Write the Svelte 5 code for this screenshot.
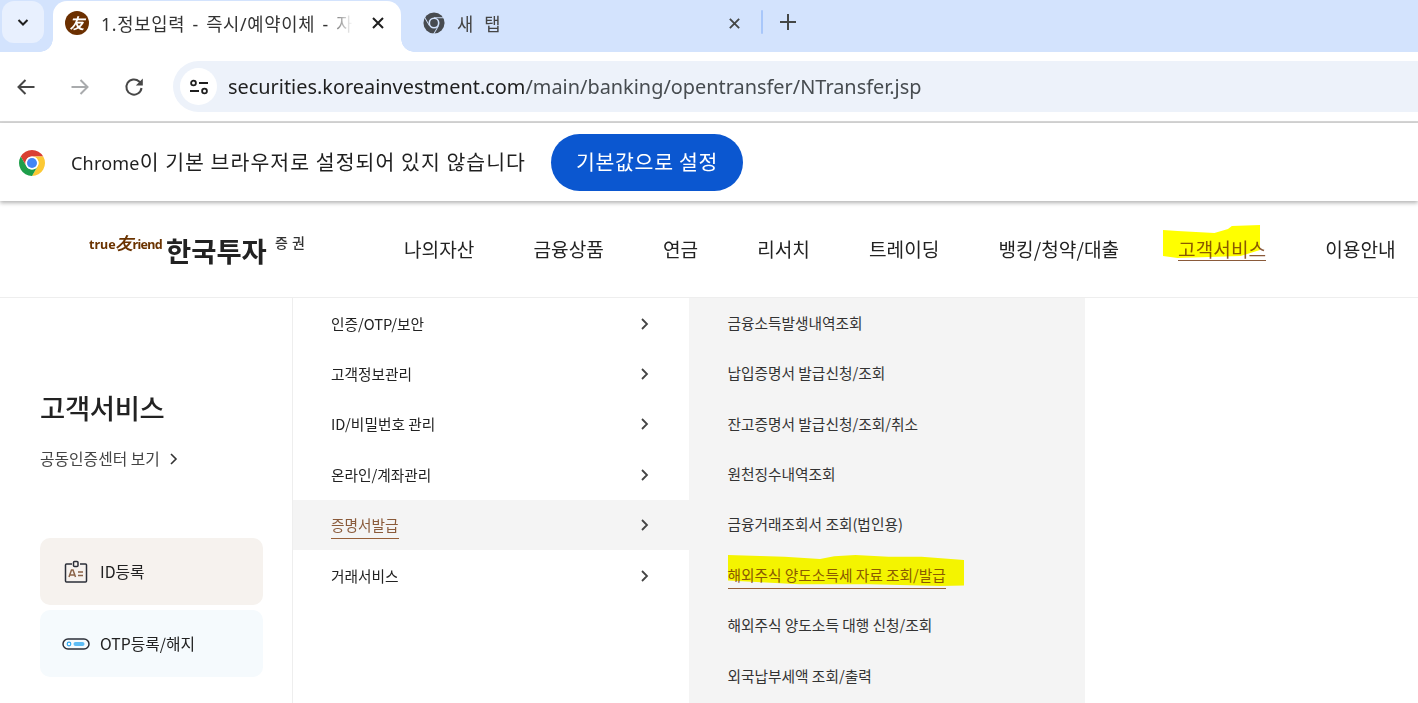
<script>
  const nav = ["나의자산", "금융상품", "연금", "리서치", "트레이딩", "뱅킹/청약/대출", "고객서비스", "이용안내"];
  const menu = ["인증/OTP/보안", "고객정보관리", "ID/비밀번호 관리", "온라인/계좌관리", "증명서발급", "거래서비스"];
  const sub = [
    "금융소득발생내역조회",
    "납입증명서 발급신청/조회",
    "잔고증명서 발급신청/조회/취소",
    "원천징수내역조회",
    "금융거래조회서 조회(법인용)",
    "해외주식 양도소득세 자료 조회/발급",
    "해외주식 양도소득 대행 신청/조회",
    "외국납부세액 조회/출력"
  ];
  // one ring segment of the chrome logo, rotated for the other two
  const ring = "M4.950 13A22 22 0 0 1 43.050 13H24A11 11 0 0 0 14.470 29.500Z";
</script>

<div class="page">
  <div class="tabstrip">
    <button class="tab-search" aria-label="탭 검색">
      <svg width="14" height="14" viewBox="0 0 14 14"><path d="M2.500 5l4.500 4.500L11.500 5" fill="none" stroke="#1f1f1f" stroke-width="2"/></svg>
    </button>
    <div class="tab active">
      <span class="favicon">友</span>
      <span class="tab-title">1.정보입력 - 즉시/예약이체 - 자</span>
      <svg class="tab-close" width="14" height="14" viewBox="0 0 14 14"><path d="M2 2l10 10M12 2L2 12" stroke="#1f1f1f" stroke-width="2"/></svg>
    </div>
    <div class="tab idle">
      <svg width="22" height="22" viewBox="0 0 48 48">
        <circle cx="24" cy="24" r="23" fill="#474b50"/>
        <circle cx="24" cy="24" r="12" fill="#d3e3fd"/>
        <circle cx="24" cy="24" r="8.500" fill="#474b50"/>
        <path d="M24 12.500H46" stroke="#d3e3fd" stroke-width="2"/>
        <path d="M24 12.500H46" stroke="#d3e3fd" stroke-width="2" transform="rotate(120 24 24)"/>
        <path d="M24 12.500H46" stroke="#d3e3fd" stroke-width="2" transform="rotate(240 24 24)"/>
      </svg>
      <span class="tab-title new">새 탭</span>
      <svg class="tab-close" width="13" height="13" viewBox="0 0 14 14"><path d="M2 2l10 10M12 2L2 12" stroke="#444746" stroke-width="2"/></svg>
    </div>
    <span class="tab-sep"></span>
    <svg class="tab-plus" width="16" height="16" viewBox="0 0 16 16"><path d="M8 0v16M0 8h16" stroke="#444746" stroke-width="2"/></svg>
  </div>

  <div class="toolbar">
    <svg class="tool" width="20" height="20" viewBox="0 0 20 20"><path d="M18.500 10H3M9.500 3L2.500 10l7 7" fill="none" stroke="#474747" stroke-width="2"/></svg>
    <svg class="tool" width="20" height="20" viewBox="0 0 20 20"><path d="M1.500 10H17M10.500 3l7 7-7 7" fill="none" stroke="#a9abad" stroke-width="2"/></svg>
    <svg class="tool" width="20" height="20" viewBox="0 0 20 20"><path d="M17.500 11a7.600 7.600 0 1 1-2.300-6.500l2.300 2.300" fill="none" stroke="#474747" stroke-width="2"/><path d="M18.800 1.500v7h-7z" fill="#474747"/></svg>
    <div class="omnibox">
      <span class="site-info">
        <svg width="20" height="16" viewBox="0 0 20 16" fill="none" stroke="#1f1f1f" stroke-width="1.800">
          <circle cx="4.500" cy="4" r="2.400"/><path d="M10 4h9M1 12h9"/><circle cx="15.500" cy="12" r="2.400"/>
        </svg>
      </span>
      <span class="url"><b>securities.koreainvestment.com</b>/main/banking/opentransfer/NTransfer.jsp</span>
    </div>
  </div>

  <div class="infobar">
    <svg width="26" height="26" viewBox="2 2 44 44">
      <path d={ring} fill="#d93f32"/>
      <path d={ring} fill="#fcc934" transform="rotate(120 24 24)"/>
      <path d={ring} fill="#1e9e4a" transform="rotate(240 24 24)"/>
      <circle cx="24" cy="24" r="11" fill="#fff"/>
      <circle cx="24" cy="24" r="8.500" fill="#4285f4"/>
    </svg>
    <span class="info-text"><span class="latin">Chrome</span>이 기본 브라우저로 설정되어 있지 않습니다</span>
    <button class="default-btn">기본값으로 설정</button>
  </div>

  <header class="site-header">
    <div class="logo">
      <span class="logo-en">true<i>友</i><em>riend</em></span>
      <span class="logo-ko">한국투자</span>
      <span class="logo-sec">증권</span>
    </div>
    <nav class="gnb">
      {#each nav as item}
        <span class="gnb-item" class:on={item === "고객서비스"}>{item}</span>
      {/each}
    </nav>
    <span class="marker marker-nav"></span>
  </header>

  <main class="content">
    <aside class="side">
      <h2>고객서비스</h2>
      <p class="cert">공동인증센터 보기
        <svg width="9" height="12" viewBox="0 0 9 12"><path d="M2 1l5 5-5 5" fill="none" stroke="#333" stroke-width="1.600"/></svg>
      </p>
      <div class="side-card id">
        <svg width="24" height="24" viewBox="0 0 24 24" fill="none">
          <path d="M8 4H2.500a1 1 0 0 0-1 1v16a1 1 0 0 0 1 1h19a1 1 0 0 0 1-1V5a1 1 0 0 0-1-1H16" stroke="#2b2f38" stroke-width="1.500"/>
          <rect x="9.500" y="1.500" width="4.500" height="5" rx="1" stroke="#2b2f38" stroke-width="1.500"/>
          <path d="M5 17l2.500-7h1.500l2.500 7M6 15h4.500M14 12h5M14 15.500h5" stroke="#8a6347" stroke-width="1.500"/>
        </svg>
        <span>ID등록</span>
      </div>
      <div class="side-card otp">
        <svg width="28" height="12" viewBox="0 0 28 12" fill="none">
          <rect x="1" y="1" width="26" height="10" rx="5" stroke="#2b2f38" stroke-width="1.500"/>
          <circle cx="7" cy="6" r="1.800" stroke="#2ea8f2" stroke-width="1.200"/>
          <rect x="11.500" y="4" width="11" height="4" rx="2" fill="#5cbcf5"/>
        </svg>
        <span>OTP등록/해지</span>
      </div>
    </aside>

    <ul class="menu">
      {#each menu as item}
        <li class:on={item === "증명서발급"}>
          <span class="label">{item}</span>
          <svg width="9" height="12" viewBox="0 0 9 12"><path d="M2 1l5 5-5 5" fill="none" stroke="#444" stroke-width="1.800"/></svg>
        </li>
      {/each}
    </ul>

    <ul class="sub">
      {#each sub as item}
        <li class:on={item.includes("세 자료")}><span class="label">{item}</span></li>
      {/each}
      <span class="marker marker-sub"></span>
    </ul>
  </main>
</div>

<style>
  :global(body) {
    margin: 0;
    background: #fff;
  }

  .page {
    width: 1418px;
    height: 703px;
    overflow: hidden;
    font-family: "Noto Sans CJK KR", "Noto Sans", sans-serif;
    color: #222;
  }

  .tabstrip {
    height: 52px;
    background: #d3e3fd;
    display: flex;
    align-items: flex-start;
    box-sizing: border-box;
    padding-top: 1px;
  }

  .tab-search {
    width: 42px;
    height: 42px;
    margin-left: 2px;
    border: 0;
    padding: 0;
    border-radius: 12px;
    background: #e8f0fe;
    display: flex;
    align-items: center;
    justify-content: center;
  }

  .tab {
    height: 51px;
    display: flex;
    align-items: center;
    box-sizing: border-box;
    font-family: "Noto Sans", "Noto Sans CJK KR", sans-serif;
    font-size: 17.700px;
    position: relative;
  }

  .tab.active {
    width: 348px;
    margin-left: 9px;
    background: #fff;
    border-radius: 14px 14px 0 0;
    padding: 0 16px 7px 12px;
    color: #333;
  }

  /* flared corners at the foot of the active tab */
  .tab.active::before,
  .tab.active::after {
    content: "";
    position: absolute;
    bottom: 0;
    width: 13px;
    height: 13px;
  }

  .tab.active::before {
    left: -13px;
    background: radial-gradient(circle at 0 0, #d3e3fd 12.500px, #fff 13px);
  }

  .tab.active::after {
    right: -13px;
    background: radial-gradient(circle at 100% 0, #d3e3fd 12.500px, #fff 13px);
    z-index: 1;
  }

  .favicon {
    flex: none;
    width: 24px;
    height: 24px;
    border-radius: 50%;
    background: #6b2f00;
    color: #fff;
    font-size: 15px;
    font-weight: 700;
    font-style: italic;
    line-height: 24px;
    text-align: center;
  }

  .tab-title {
    flex: 1;
    margin-left: 12px;
    white-space: nowrap;
    overflow: hidden;
    -webkit-mask-image: linear-gradient(to right, #000 86%, transparent 96%);
    mask-image: linear-gradient(to right, #000 86%, transparent 96%);
    letter-spacing: 0.7px;
    word-spacing: 2px;
  }

  .tab-title.new {
    color: #444;
    word-spacing: 5px;
  }

  .tab-close {
    flex: none;
    margin-left: 8px;
  }

  .tab.idle {
    width: 359px;
    padding: 0 19px 7px 22px;
    color: #444;
  }

  .tab-sep {
    width: 2px;
    height: 24px;
    margin: 9px 0 0 1px;
    border-radius: 1px;
    background: #a8c7fa;
  }

  .tab-plus {
    margin: 13px 0 0 17px;
  }

  .toolbar {
    height: 71px;
    background: #fff;
    box-sizing: border-box;
    padding: 9px 0 9px 16px;
    display: flex;
    align-items: center;
    gap: 34px;
    border-bottom: 2px solid #d6d6d6;
  }

  .omnibox {
    flex: 1;
    height: 51px;
    margin-left: -5px;
    border-radius: 26px 0 0 26px;
    background: #edf2fa;
    display: flex;
    align-items: center;
    padding-left: 7px;
    gap: 11px;
  }

  .site-info {
    width: 37px;
    height: 37px;
    border-radius: 50%;
    background: #fff;
    display: flex;
    align-items: center;
    justify-content: center;
  }

  .url {
    font-family: "Noto Sans", sans-serif;
    font-size: 19.900px;
    color: #474c50;
  }

  .url b {
    font-weight: 400;
    color: #1f1f1f;
  }

  .infobar {
    height: 78px;
    box-sizing: border-box;
    padding: 1px 0 0 19px;
    display: flex;
    align-items: center;
    background: #fff;
    box-shadow: 0 2px 4px rgba(0, 0, 0, 0.3);
    position: relative;
  }

  .info-text {
    margin: -3px 0 0 26px;
    font-family: "Noto Sans CJK KR", sans-serif;
    font-size: 20.500px;
    color: #1f1f1f;
    letter-spacing: 1.040px;
  }

  .latin {
    font-family: "Noto Sans", sans-serif;
    font-size: 18px;
    letter-spacing: 0.2px;
  }

  .default-btn {
    width: 192px;
    height: 57px;
    margin-left: 25px;
    border: 0;
    padding: 0 0 3px;
    border-radius: 29px;
    background: #0b57d0;
    color: #fff;
    font-family: "Noto Sans CJK KR", sans-serif;
    font-size: 20.500px;
    letter-spacing: 0.7px;
  }

  .site-header {
    height: 97px;
    box-sizing: border-box;
    border-bottom: 1px solid #eee;
    display: flex;
    position: relative;
  }

  .logo {
    width: 404px;
    flex: none;
    position: relative;
  }

  .logo-en {
    position: absolute;
    left: 89px;
    top: 33px;
    font-family: "Noto Sans", sans-serif;
    font-size: 12.500px;
    font-weight: 700;
    color: #6b3300;
    white-space: nowrap;
  }

  .logo-en i {
    font-size: 17px;
    line-height: 1;
  }

  .logo-en em {
    font-style: normal;
    letter-spacing: -0.700px;
  }

  .logo-ko {
    position: absolute;
    left: 166px;
    top: 30px;
    font-size: 27.400px;
    font-weight: 700;
    line-height: 38px;
    color: #222;
  }

  .logo-sec {
    position: absolute;
    left: 275px;
    top: 31px;
    font-size: 14px;
    font-weight: 500;
    letter-spacing: 4px;
    color: #333;
  }

  .gnb {
    display: flex;
    align-items: flex-start;
    gap: 59px;
    padding-top: 37px;
    font-size: 19.150px;
    line-height: 22px;
    white-space: nowrap;
  }

  .gnb-item {
    color: #222;
  }

  .gnb-item.on {
    color: #8a5a3a;
    border-bottom: 1px solid #8a5a3a;
  }

  .marker {
    position: absolute;
    background: #ffff00;
    mix-blend-mode: multiply;
  }

  .marker-nav {
    left: 1163px;
    top: 24px;
    width: 97px;
    height: 33px;
    clip-path: polygon(0 15%, 15% 18%, 53% 24%, 67% 12%, 71% 3%, 100% 0, 100% 76%, 80% 94%, 15% 100%, 0 94%);
  }

  .content {
    display: grid;
    grid-template-columns: 293px 396px 396px;
    height: 405px;
  }

  .side {
    box-sizing: border-box;
    border-right: 1px solid #eee;
    padding: 90px 29px 0 40px;
  }

  h2 {
    margin: 0;
    font-size: 27.400px;
    font-weight: 500;
    line-height: 38px;
    letter-spacing: -0.3px;
    color: #222;
  }

  .cert {
    margin: 21px 0 68px;
    font-size: 15.800px;
    line-height: 23px;
    color: #444;
    display: flex;
    align-items: center;
    gap: 9px;
  }

  .side-card {
    height: 67px;
    border-radius: 10px;
    margin-bottom: 5px;
    display: flex;
    align-items: center;
    gap: 12px;
    padding-left: 24px;
    font-size: 15.800px;
    color: #222;
  }

  .side-card.id {
    background: #f6f2ee;
  }

  .side-card.otp {
    background: #f5fafd;
  }

  .side-card.otp svg {
    margin-left: -2px;
    margin-right: -2px;
  }

  ul {
    list-style: none;
    margin: 0;
    padding: 0;
  }

  .menu li {
    height: 50.400px;
    box-sizing: border-box;
    padding: 0 40px 0 38px;
    display: flex;
    align-items: center;
    justify-content: space-between;
    font-size: 14.700px;
    color: #222;
  }

  .menu li svg {
    margin-top: 1px;
  }

  .menu li.on {
    background: #f4f4f4;
  }

  .menu li.on .label,
  .sub li.on .label {
    color: #8a5a3a;
    border-bottom: 1px solid #96603a;
    padding-bottom: 3px;
    margin-top: 4px;
  }

  .sub {
    background: #f4f4f4;
    position: relative;
  }

  .sub li {
    height: 50.400px;
    padding-left: 38.500px;
    display: flex;
    align-items: center;
    font-size: 14.700px;
    color: #333;
  }

  .sub li:first-child {
    margin-top: -0.800px;
  }

  .marker-sub {
    left: 39px;
    top: 257px;
    width: 236px;
    height: 31px;
    clip-path: polygon(0 0, 24% 6%, 39% 13%, 45% 4%, 54% 0, 68% 6%, 82% 6%, 100% 16%, 100% 98%, 90% 100%, 60% 94%, 30% 94%, 0 82%);
  }
</style>
